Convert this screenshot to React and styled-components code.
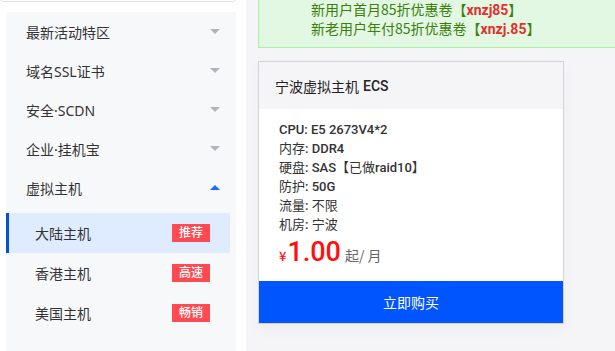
import React from "react";
import styled, { createGlobalStyle } from "styled-components";

const Global = createGlobalStyle`
  html, body {
    margin: 0;
    padding: 0;
    background: #ffffff;
    font-family: "Noto Sans CJK SC", "Noto Sans", sans-serif;
    overflow: hidden;
  }
  * { box-sizing: border-box; }
`;

const Page = styled.div`
  display: flex;
  height: 351px;
  overflow: hidden;
`;

const LeftCol = styled.div`
  width: 236px;
  display: flex;
  flex-direction: column;
`;

const SearchBox = styled.div`
  height: 40px;
  margin-top: -38px;
  width: 236px;
  border: 1px solid #e2e2e6;
  border-radius: 3px;
`;

const Sidebar = styled.ul`
  list-style: none;
  margin: 10px 0 0 6px;
  padding: 0;
  flex: 1;
  background: #f7f8fa;
  font-family: "Noto Sans", "Noto Sans CJK SC", sans-serif;
`;

const MenuItem = styled.li`
  height: 39px;
  display: flex;
  align-items: center;
  justify-content: space-between;
  padding: 0 16px 0 20px;
  font-size: 14px;
  color: #333;
`;

const Caret = styled.span`
  width: 0;
  height: 0;
  border-left: 5px solid transparent;
  border-right: 5px solid transparent;
  ${(p) =>
    p.$up
      ? "border-bottom: 5px solid #1a66ff;"
      : "border-top: 5px solid #b4b4b8;"}
`;

const SubMenu = styled.ul`
  list-style: none;
  margin: 6px 6px 0 0;
  padding: 0;
`;

const SubItem = styled.li`
  height: 40px;
  display: flex;
  align-items: center;
  justify-content: space-between;
  padding: 0 20px 0 26px;
  font-size: 14px;
  color: #333;
  background: ${(p) => (p.$active ? "#dfecff" : "transparent")};
  border-left: 3px solid ${(p) => (p.$active ? "#0052d9" : "transparent")};
`;

const Badge = styled.span`
  width: 38px;
  height: 18px;
  line-height: 18px;
  text-align: center;
  background: #ff4a52;
  color: #fff;
  font-size: 12px;
  font-weight: 500;
`;

const RightCol = styled.div`
  flex: 1;
  margin-left: 10px;
  padding-left: 12px;
  background: #f5f5f7;
  overflow: hidden;
`;

const Notice = styled.div`
  width: 420px;
  margin-top: -11px;
  padding: 10px 0 9px 52px;
  background: #e3f8e3;
  border: 1px solid #a6f2a6;
  color: #3a800c;
  font-size: 14px;
`;

const NoticeLine = styled.div`
  height: 19px;
  line-height: 19px;
`;

const Code = styled.b`
  color: #e2302c;
  font-family: "Roboto", "Noto Sans", sans-serif;
  font-weight: 700;
`;

const Card = styled.div`
  width: 306px;
  margin-top: 13px;
  border: 1px solid #d4d4d8;
  background: #fff;
  box-shadow: 0 6px 14px rgba(0, 0, 0, 0.035);
`;

const CardHead = styled.div`
  height: 47px;
  display: flex;
  align-items: center;
  padding-left: 16px;
  background: #f5f5f7;
  font-size: 14px;
  color: #222;
`;

const Strong = styled.span`
  font-family: "Roboto", "Noto Sans", sans-serif;
  font-weight: 500;
  margin-left: 4px;
`;

const CardBody = styled.div`
  padding: 10px 20px 14px 20px;
`;

const Spec = styled.div`
  height: 19px;
  font-size: 13px;
  line-height: 19px;
  color: #333;
`;

const B = styled.span`
  font-family: "Roboto", "Noto Sans", sans-serif;
  font-weight: 500;
`;

const Price = styled.div`
  margin-top: 4px;
  display: flex;
  align-items: baseline;
  height: 30px;
  line-height: 30px;
  color: #ff1010;
`;

const Yen = styled.span`
  font-size: 13px;
  font-weight: 500;
`;

const Amount = styled.span`
  font-family: "Roboto", "Noto Sans", sans-serif;
  font-size: 27px;
  font-weight: 500;
  margin: 0 4px 0 1px;
`;

const Unit = styled.span`
  font-size: 14px;
  color: #666;
`;

const BuyButton = styled.div`
  height: 42px;
  display: flex;
  align-items: center;
  justify-content: center;
  background: #0055ff;
  color: #fff;
  font-size: 14px;
`;

const menus = ["最新活动特区", "域名SSL证书", "安全·SCDN", "企业·挂机宝"];

const subs = [
  { name: "大陆主机", tag: "推荐", active: true },
  { name: "香港主机", tag: "高速" },
  { name: "美国主机", tag: "畅销" },
];

export default function App() {
  return (
    <Page>
      <Global />
      <LeftCol>
        <SearchBox />
        <Sidebar>
          {menus.map((m) => (
            <MenuItem key={m}>
              {m}
              <Caret />
            </MenuItem>
          ))}
          <MenuItem>
            虚拟主机
            <Caret $up />
          </MenuItem>
          <SubMenu>
            {subs.map((s) => (
              <SubItem key={s.name} $active={s.active}>
                {s.name}
                <Badge>{s.tag}</Badge>
              </SubItem>
            ))}
          </SubMenu>
        </Sidebar>
      </LeftCol>
      <RightCol>
        <Notice>
          <NoticeLine>
            新用户首月85折优惠卷【<Code>xnzj85</Code>】
          </NoticeLine>
          <NoticeLine>
            新老用户年付85折优惠卷【<Code>xnzj.85</Code>】
          </NoticeLine>
        </Notice>
        <Card>
          <CardHead>
            宁波虚拟主机<Strong>ECS</Strong>
          </CardHead>
          <CardBody>
            <Spec>
              <B>CPU: E5 2673V4*2</B>
            </Spec>
            <Spec>
              内存<B>: DDR4</B>
            </Spec>
            <Spec>
              硬盘<B>: SAS</B>【已做<B>raid10</B>】
            </Spec>
            <Spec>
              防护<B>: 50G</B>
            </Spec>
            <Spec>
              流量<B>: </B>不限
            </Spec>
            <Spec>
              机房<B>: </B>宁波
            </Spec>
            <Price>
              <Yen>¥</Yen>
              <Amount>1.00</Amount>
              <Unit>起/ 月</Unit>
            </Price>
          </CardBody>
          <BuyButton>立即购买</BuyButton>
        </Card>
      </RightCol>
    </Page>
  );
}
